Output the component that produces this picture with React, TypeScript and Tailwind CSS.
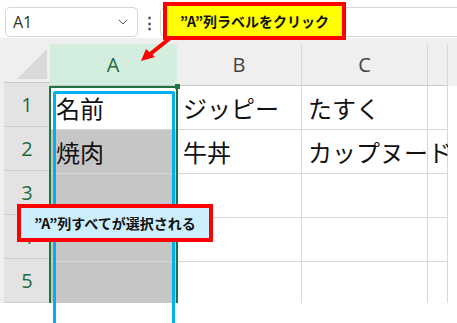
import { ChevronDown } from 'lucide-react'

const jp = { fontFamily: '"Noto Sans CJK JP", "Noto Sans", sans-serif' }
const latin = { fontFamily: '"Open Sans", "Noto Sans", sans-serif' }

const columns = [
  { key: 'A', width: 'w-[127px]', active: true },
  { key: 'B', width: 'w-[125px]', active: false },
  { key: 'C', width: 'w-[126px]', active: false },
  { key: 'D', width: 'w-[20px]', active: false },
]

const rows: string[][] = [
  ['名前', 'ジッピー', 'たすく', ''],
  ['焼肉', '牛丼', 'カップヌード', ''],
  ['', '', '', ''],
  ['', '', '', ''],
  ['', '', '', ''],
]

export default function App() {
  return (
    <div className="relative h-[323px] w-[457px] overflow-hidden bg-white">
      {/* name box + formula bar */}
      <div className="flex h-[38px] items-start bg-white pt-[7px]">
        <div className="ml-[5px] flex h-[30px] w-[133px] items-center justify-between rounded-[5px] border border-[#d6d6d6] bg-white pl-[7px] pr-[6px] text-[16px] text-[#333]" style={latin}>
          <span>A1</span>
          <ChevronDown className="h-4 w-4 text-[#555]" strokeWidth={1.5} />
        </div>
        <div className="flex h-[30px] w-[22px] items-center justify-center text-[15px] font-bold text-[#444]" style={latin}>⋮</div>
        <div className="h-[30px] flex-1 rounded-l-[5px] border border-r-0 border-[#d6d6d6] bg-white" />
      </div>

      {/* sheet */}
      <div className="flex h-[265px] bg-[#efefef] pl-[4px] pt-[6px]">
        <div className="flex h-[259px] w-[444px] overflow-hidden">
          <div className="flex flex-col">
            <div className="relative h-[42px] w-[46px] border-b border-[#c8c8c8] bg-[#efefef]">
              <div className="absolute bottom-[3px] right-[3px] h-0 w-0 border-b-[30px] border-l-[30px] border-b-[#dadada] border-l-transparent" />
            </div>
            {rows.map((_, i) => (
              <div
                key={i}
                className="flex h-[44px] w-[46px] shrink-0 items-center justify-center border-b border-[#cfcfcf] bg-[#e3e3e3] text-[20px] text-[#1e6b40]"
                style={latin}
              >
                {i + 1}
              </div>
            ))}
          </div>
          {columns.map((col, c) => (
            <div key={col.key} className={`flex shrink-0 flex-col ${col.width}`}>
              <div
                className={`flex h-[42px] shrink-0 items-center justify-center border-b border-r text-[20px] ${
                  col.active ? 'border-[#d3eede] border-b-[#c8c8c8] bg-[#d3eede] text-[#1e6b40]' : 'border-[#d8d8d8] border-b-[#c8c8c8] bg-[#efefef] text-[#444]'
                }`}
                style={latin}
              >
                {col.key === 'D' ? '' : col.key}
              </div>
              {rows.map((row, r) => (
                <div
                  key={r}
                  className={`flex h-[44px] shrink-0 items-center whitespace-nowrap border-b border-r border-[#d8d8d8] pl-[6px] text-[24px] text-[#111] ${
                    col.active ? (r === 0 ? 'bg-white' : 'bg-[#c6c6c6]') : 'bg-white'
                  } ${c === 2 ? 'relative z-10' : ''}`}
                  style={jp}
                >
                  {row[c]}
                </div>
              ))}
            </div>
          ))}
        </div>
        <div className="mt-[42px] flex-1 bg-white" />
      </div>

      {/* column selection border */}
      <div className="pointer-events-none absolute left-[49px] top-[86px] h-[217px] w-[129px] border-2 border-b-0 border-[#217346]" />
      <div className="pointer-events-none absolute left-[175px] top-[84px] h-[5px] w-[5px] bg-[#217346]" />

      {/* blue highlight */}
      <div className="pointer-events-none absolute left-[53px] top-[91px] h-[240px] w-[122px] rounded-t-[3px] border-[3px] border-b-0 border-[#00b0f0]" />

      {/* callout: click label */}
      <div
        className="absolute left-[163px] top-[2px] flex h-[38px] w-[183px] items-center justify-center border-4 border-[#ff0000] bg-[#ffff00] text-[14px] font-bold text-[#111]"
        style={jp}
      >
        ”A”列ラベルをクリック
      </div>
      <svg className="absolute left-[136px] top-[36px]" width="40" height="28" viewBox="0 0 40 28">
        <line x1="33" y1="3" x2="13" y2="19" stroke="#ff0000" strokeWidth="4" strokeLinecap="round" />
        <polygon points="5,25 10,13 19,21" fill="#ff0000" />
      </svg>

      {/* callout: result */}
      <div
        className="absolute left-[17px] top-[204px] flex h-[38px] w-[196px] items-center justify-center border-4 border-[#ff0000] bg-[#cdeefd] text-[14px] font-bold text-[#111]"
        style={jp}
      >
        ”A”列すべてが選択される
      </div>
    </div>
  )
}
